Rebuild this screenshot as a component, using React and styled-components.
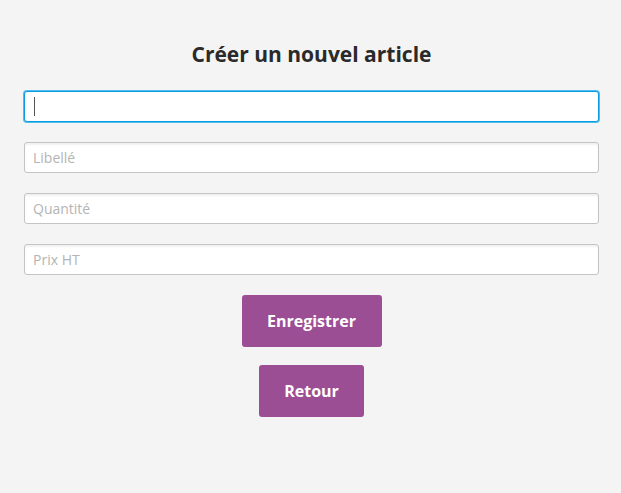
import React from 'react';
import styled, { createGlobalStyle } from 'styled-components';

const GlobalStyle = createGlobalStyle`
  html, body {
    margin: 0;
    padding: 0;
    background: #f4f4f4;
  }
  body {
    font-family: 'Open Sans', 'Noto Sans', sans-serif;
  }
`;

const Page = styled.div`
  width: 621px;
  height: 493px;
  box-sizing: border-box;
  padding: 38px 22px 0 24px;
  display: flex;
  flex-direction: column;
  align-items: stretch;
`;

const Title = styled.h1`
  margin: 0 0 21px;
  text-align: center;
  font-size: 21px;
  font-weight: 700;
  color: #2a2a2a;
  line-height: 32px;
`;

const Fields = styled.div`
  display: flex;
  flex-direction: column;
  gap: 20px;
`;

const Field = styled.input`
  box-sizing: border-box;
  height: 31px;
  width: 100%;
  margin: 0;
  padding: 0 8px;
  font-family: inherit;
  font-size: 14px;
  color: #333;
  background: #fff;
  border: 1px solid ${p => (p.$focused ? '#0a9ce0' : '#c4c4c4')};
  border-radius: 3px;
  box-shadow: ${p => (p.$focused ? '0 0 0 1px #4fbcec' : 'inset 0 2px 2px rgba(0,0,0,0.06)')};
  outline: none;

  &::placeholder {
    color: #b4b4b4;
  }
`;

const Caret = styled.span`
  position: absolute;
  left: 10px;
  top: 6px;
  width: 1px;
  height: 19px;
  background: #555;
`;

const FocusWrap = styled.div`
  position: relative;
`;

const Actions = styled.div`
  margin-top: 20px;
  display: flex;
  flex-direction: column;
  align-items: center;
  gap: 18px;
`;

const Button = styled.button`
  height: 52px;
  padding: 0 25.5px;
  border: none;
  border-radius: 3px;
  background: #9c4e95;
  color: #fff;
  font-family: inherit;
  font-size: 16px;
  font-weight: 700;
  cursor: pointer;
`;

export default function App() {
  return (
    <>
      <GlobalStyle />
      <Page>
        <Title>Créer un nouvel article</Title>
        <Fields>
          <FocusWrap>
            <Field $focused />
            <Caret />
          </FocusWrap>
          <Field placeholder="Libellé" />
          <Field placeholder="Quantité" />
          <Field placeholder="Prix HT" />
        </Fields>
        <Actions>
          <Button>Enregistrer</Button>
          <Button>Retour</Button>
        </Actions>
      </Page>
    </>
  );
}
